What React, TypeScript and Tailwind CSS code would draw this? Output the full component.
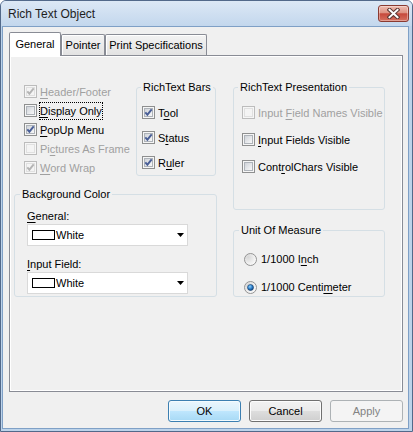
import type { ReactNode } from 'react';
import clsx from 'clsx';

// mnemonic letter
function U({ children }: { children: ReactNode }) {
  return <span className="underline decoration-1 underline-offset-[2px]">{children}</span>;
}

function SharedDefs() {
  return (
    <svg width="0" height="0" className="absolute">
      <defs>
        <linearGradient id="cbFill" x1="0" y1="0" x2="1" y2="1">
          <stop offset="0" stopColor="#cdd1d7" />
          <stop offset="1" stopColor="#fbfbfb" />
        </linearGradient>
        <radialGradient id="rbFill" cx="0.3" cy="0.3" r="0.8">
          <stop offset="0" stopColor="#d6d6d6" />
          <stop offset="0.6" stopColor="#eeeeee" />
          <stop offset="1" stopColor="#fcfcfc" />
        </radialGradient>
        <radialGradient id="rbDot" cx="0.4" cy="0.35" r="0.7">
          <stop offset="0" stopColor="#8fd3fb" />
          <stop offset="0.55" stopColor="#2a7bc8" />
          <stop offset="1" stopColor="#0d3d75" />
        </radialGradient>
      </defs>
    </svg>
  );
}

function CheckBox({ checked, disabled }: { checked?: boolean; disabled?: boolean }) {
  return (
    <svg width="13" height="13" viewBox="0 0 13 13" className="shrink-0">
      <rect x="0.5" y="0.5" width="12" height="12" fill="#f6f6f6" stroke={disabled ? '#bcbcbc' : '#8e8f8f'} />
      <rect
        x="2.5"
        y="2.5"
        width="8"
        height="8"
        fill={disabled ? '#f4f4f4' : 'url(#cbFill)'}
        stroke={disabled ? '#e0e0e0' : '#aeb3b9'}
      />
      {checked && (
        <path
          d="M3.3 6.3 L5.4 8.7 L9.7 3.4"
          fill="none"
          stroke={disabled ? '#b4b4b4' : '#4a5f97'}
          strokeWidth="1.9"
        />
      )}
    </svg>
  );
}

function Radio({ checked }: { checked?: boolean }) {
  return (
    <svg width="13" height="13" viewBox="0 0 13 13" className="shrink-0">
      <circle cx="6.5" cy="6.5" r="6" fill="url(#rbFill)" stroke="#939393" />
      {checked && <circle cx="6.5" cy="6.5" r="3" fill="url(#rbDot)" stroke="#1a3f6b" strokeWidth="0.6" />}
    </svg>
  );
}

function Check({
  label,
  checked,
  disabled,
  focus,
  className,
}: {
  label: ReactNode;
  checked?: boolean;
  disabled?: boolean;
  focus?: boolean;
  className?: string;
}) {
  return (
    <div className={clsx('flex items-center', className)}>
      <CheckBox checked={checked} disabled={disabled} />
      {focus ? (
        <span className="ml-[2px] border border-dotted border-black leading-[16px]">{label}</span>
      ) : (
        <span className={clsx('ml-[3px]', disabled && 'text-[#a0a0a0]')}>{label}</span>
      )}
    </div>
  );
}

function Group({ title, className, legendCn, children }: { title: string; className?: string; legendCn?: string; children: ReactNode }) {
  return (
    <fieldset className={clsx('rounded-[3px] border border-[#d5dfe5]', className)}>
      <legend className={clsx('px-[2px] leading-[14px]', legendCn)}>{title}</legend>
      {children}
    </fieldset>
  );
}

function ColorCombo() {
  return (
    <div className="mt-[1px] flex h-[22px] w-[161px] items-center border border-[#d9d9d9] bg-white">
      <div className="ml-[4px] h-[10px] w-[23px] border border-black bg-white" />
      <span className="ml-[1px]">White</span>
      <svg width="7" height="4" viewBox="0 0 7 4" className="ml-auto mr-[3px]">
        <path d="M0 0 H7 L3.5 4 Z" fill="#000" />
      </svg>
    </div>
  );
}

function CloseButton() {
  return (
    <div className="flex h-[17px] w-[31px] items-center justify-center rounded-[3px] border border-[#8a3a31] bg-[linear-gradient(#efbcb0,#de9283_45%,#c6493c_52%,#d6705f)] shadow-[inset_0_0_0_1px_rgba(255,255,255,0.35)]">
      <svg width="13" height="11" viewBox="0 0 13 11">
        <path d="M2.5 1.8 L10.5 9.2 M10.5 1.8 L2.5 9.2" stroke="#5e3a36" strokeWidth="4" strokeLinecap="square" />
        <path d="M2.5 1.8 L10.5 9.2 M10.5 1.8 L2.5 9.2" stroke="#ffffff" strokeWidth="2" strokeLinecap="square" />
      </svg>
    </div>
  );
}

function Tab({ label, active }: { label: string; active?: boolean }) {
  return (
    <div
      className={clsx(
        'flex items-center justify-center border border-b-0 border-[#898c95] rounded-t-[2px]',
        active
          ? 'relative z-10 -mb-px h-[24px] bg-white pb-[2px]'
          : 'h-[21px] bg-gradient-to-b from-[#f3f3f3] to-[#e3e3e3] shadow-[inset_1px_1px_0_#fff]',
      )}
      style={{ width: label === 'General' ? 52 : label === 'Pointer' ? 44 : 102 }}
    >
      {label}
    </div>
  );
}

function Button({ children, kind }: { children: ReactNode; kind: 'default' | 'normal' | 'disabled' }) {
  return (
    <div
      className={clsx(
        'flex h-[22px] w-[73px] items-center justify-center rounded-[3px] border',
        kind === 'default' &&
          'border-[#3c7fb1] bg-[linear-gradient(#eaf6fd,#d9f0fc_48%,#bee6fd_52%,#a7d9f5)] shadow-[inset_0_0_0_1px_#f4fbfe]',
        kind === 'normal' &&
          'border-[#707070] bg-[linear-gradient(#f2f2f2,#ebebeb_48%,#dddddd_52%,#cfcfcf)] shadow-[inset_0_0_0_1px_#fcfcfc]',
        kind === 'disabled' && 'border-[#adb2b5] bg-[#f4f4f4] text-[#838383]',
      )}
    >
      {children}
    </div>
  );
}

export default function App() {
  return (
    <div className="h-[432px] w-[413px] font-['Liberation_Sans',Arial,sans-serif] text-[11px] leading-[14px] text-black">
      <SharedDefs />
      <div className="flex h-full flex-col rounded-t-[6px] border border-[#52698a] bg-[#bcd3ea]">
        <div className="flex h-[25px] shrink-0 justify-between rounded-t-[5px] bg-gradient-to-b from-[#dce8f5] to-[#c3d7ed] pl-[7px] pr-[3px]">
          <span className="self-center text-[12px] text-[#1e1e1e]">Rich Text Object</span>
          <div className="pt-[4px]">
            <CloseButton />
          </div>
        </div>

        <div className="mb-[2px] ml-[1px] mr-[3px] flex flex-1 flex-col border border-[#7fa0c6] bg-[#f0f0f0] pl-[6px] pr-[5px] pt-[5px]">
          {/* tabs */}
          <div className="flex h-[23px] items-end">
            <Tab label="General" active />
            <Tab label="Pointer" />
            <Tab label="Print Specifications" />
          </div>

          {/* tab panel */}
          <div className="flex h-[337px] w-[394px] gap-[16px] border border-[#898c95] bg-[#f0f0f0] pl-[4px] pt-[24px] shadow-[inset_1px_1px_0_#fff,inset_-1px_-1px_0_#fff]">
            <div className="flex w-[203px] flex-col">
              <div className="flex items-start">
                <div className="mt-[2px] flex w-[122px] flex-col pl-[10px]">
                  <Check className="h-[19px]" checked disabled label={<><U>H</U>eader/Footer</>} />
                  <Check className="h-[19px]" focus label={<><U>D</U>isplay Only</>} />
                  <Check className="h-[19px]" checked label={<><U>P</U>opUp Menu</>} />
                  <Check className="h-[19px]" disabled label={<>Pi<U>c</U>tures As Frame</>} />
                  <Check className="h-[19px]" checked disabled label={<><U>W</U>ord Wrap</>} />
                </div>
                <Group title="RichText Bars" className="w-[80px]" legendCn="ml-[4px]">
                  <div className="flex flex-col pl-[5px] pt-[6px]">
                    <Check className="h-[25px]" checked label={<>T<U>o</U>ol</>} />
                    <Check className="h-[25px]" checked label={<>S<U>t</U>atus</>} />
                    <Check className="h-[25px]" checked label={<>R<U>u</U>ler</>} />
                  </div>
                </Group>
              </div>

              <Group title="Background Color" className="mt-[10px] w-[203px]" legendCn="ml-[5px]">
                <div className="flex flex-col pb-[2px] pl-[12px] pt-[8px]">
                  <span>
                    <U>G</U>eneral:
                  </span>
                  <ColorCombo />
                  <span className="mt-[11px]">
                    <U>I</U>nput Field:
                  </span>
                  <ColorCombo />
                </div>
              </Group>
            </div>

            <div className="flex w-[152px] flex-col">
              <Group title="RichText Presentation" className="w-[152px]" legendCn="ml-[4px]">
                <div className="flex flex-col pb-[29px] pl-[8px] pt-[5px]">
                  <Check className="h-[27px]" disabled label={<>Input <U>F</U>ield Names Visible</>} />
                  <Check className="h-[27px]" label={<><U>I</U>nput Fields Visible</>} />
                  <Check className="h-[27px]" label={<>Cont<U>r</U>olChars Visible</>} />
                </div>
              </Group>

              <Group title="Unit Of Measure" className="mt-[13px] w-[152px]" legendCn="ml-[5px]">
                <div className="flex flex-col gap-[14px] pb-[2px] pl-[10px] pt-[15px]">
                  <div className="flex h-[14px] items-center">
                    <Radio />
                    <span className="ml-[4px]">
                      1/1000 I<U>n</U>ch
                    </span>
                  </div>
                  <div className="flex h-[14px] items-center">
                    <Radio checked />
                    <span className="ml-[4px]">
                      1/1000 Centi<U>m</U>eter
                    </span>
                  </div>
                </div>
              </Group>
            </div>
          </div>

          {/* buttons */}
          <div className="mt-[8px] flex justify-end gap-[8px]">
            <Button kind="default">OK</Button>
            <Button kind="normal">Cancel</Button>
            <Button kind="disabled">Apply</Button>
          </div>
        </div>
      </div>
    </div>
  );
}
